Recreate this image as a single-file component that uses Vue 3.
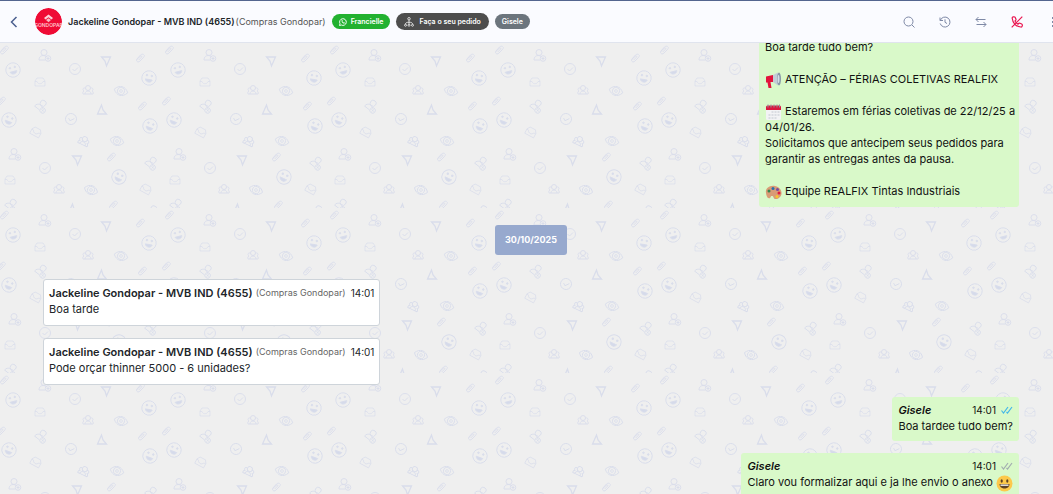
<script setup>
import { ref } from 'vue';

const contact = ref({
    name: 'Jackeline Gondopar - MVB IND (4655)',
    company: '(Compras Gondopar)',
});

const received = ref([
    { id: 1, time: '14:01', text: 'Boa tarde' },
    { id: 2, time: '14:01', text: 'Pode orçar thinner 5000 - 6 unidades?' },
]);

const sent = ref([
    { id: 3, time: '14:01', text: 'Boa tardee tudo bem?', read: true, smile: false },
    { id: 4, time: '14:01', text: 'Claro vou formalizar aqui e ja lhe envio o anexo', read: false, smile: true },
]);

// wallpaper tile: symbol, x, y, rotation
const doodles = [
    ['clip', 4, 7, 0], ['smile', 13, 27, -15], ['user', 44, 13, 0], ['check', 75, 26, 0],
    ['tri', 106, 18, 0], ['clip', 140, 15, 0], ['smile', 149, 35, 10], ['inbox', 40, 39, 0],
    ['group', 88, 47, 0], ['eye', 121, 48, 15], ['clip', 1, 58, 0], ['clip', 166, 58, 0],
    ['user', 41, 63, 38], ['tri', 102, 67, 180], ['clip', 142, 63, 0], ['check', 71, 76, 20],
    ['smile', 9, 77, 20], ['smile', 150, 83, 20], ['inbox', 36, 89, 28], ['group', 84, 98, 25],
    ['eye', 117, 98, 15], ['tri', 77, 117, 0], ['clip', 111, 114, 0], ['user', 14, 112, 0],
    ['check', 45, 125, 0], ['user', 151, 120, 38], ['smile', 119, 134, 25], ['inbox', 10, 137, 0],
    ['group', 59, 146, 0], ['eye', 91, 147, 20], ['inbox', 146, 146, 28], ['user', 11, 162, 38],
    ['tri', 73, 166, 180], ['clip', 113, 162, 0], ['user', 152, 169, 30],
];
</script>

<template>
    <div class="page">
        <header class="topbar">
            <button type="button" class="icon-btn back" aria-label="Voltar">
                <svg width="8" height="12" viewBox="0 0 8 12"><path d="M6.5 1 1.5 6l5 5" fill="none" stroke="#4a5f8f" stroke-width="1.5" /></svg>
            </button>
            <svg class="avatar" viewBox="0 0 27 27">
                <circle cx="13.5" cy="13.5" r="13.5" fill="#ef0b35" />
                <path d="m9 10 4.500-3.500L18 10l-1.500 1.500-3-2.300-3 2.300z" fill="#fbd3da" />
                <path d="m11 12 2.500-1.800L16 12l-2.500 2.300z" fill="#f9b9c4" />
                <text x="13.500" y="19" text-anchor="middle" font-size="5" font-weight="600" fill="#ffc4ce">GONDOPAR</text>
            </svg>
            <h1>{{ contact.name }}</h1>
            <span class="company">{{ contact.company }}</span>
            <span class="tag green">
                <svg width="8" height="8" viewBox="0 0 16 16" fill="none" stroke="#fff">
                    <path d="m1 15 1-3.700A6.700 6.700 0 1 1 4.700 14z" stroke-width="1.900" />
                    <path d="M5 4.800c0 3.500 2.500 6.200 6 6.400l.9-1.900-2-1-1 .9C8 8.800 7.300 8 6.800 6.900l.9-1-.9-1.900z" fill="#fff" stroke="none" />
                </svg>
                Francielle
            </span>
            <span class="tag dark">
                <svg width="10" height="10" viewBox="0 0 20 20" fill="none" stroke="#fff" stroke-width="1.500">
                    <circle cx="10" cy="3.500" r="2.500" />
                    <circle cx="3" cy="16.500" r="2" />
                    <circle cx="10" cy="16.500" r="2" />
                    <circle cx="17" cy="16.500" r="2" />
                    <path d="M10 6v8.500M3 14.500c0-3 2-4 7-4s7 1 7 4" />
                </svg>
                Faça o seu pedido
            </span>
            <span class="tag gray">Gisele</span>
            <nav class="actions">
                <button type="button" class="icon-btn" aria-label="Pesquisar">
                    <svg width="12" height="12" viewBox="0 0 12 12" fill="none" stroke="#7e89a6"><circle cx="5.500" cy="5.500" r="4.500" /><path d="m9 9 2.500 2.500" /></svg>
                </button>
                <button type="button" class="icon-btn" aria-label="Histórico">
                    <svg width="12" height="12" viewBox="0 0 12 12" fill="none" stroke="#7e89a6"><path d="M1 1.500v3h3M1.300 4.300A5 5 0 1 1 1.200 7.500M6 3.300V6.300l2 1.200" /></svg>
                </button>
                <button type="button" class="icon-btn" aria-label="Transferir">
                    <svg width="12" height="12" viewBox="0 0 12 12" fill="none" stroke="#7e89a6"><path d="M3.500 1 1 3.500 3.500 6M1 3.500h9.500M8.500 6 11 8.500 8.500 11M11 8.500H1.500" /></svg>
                </button>
                <button type="button" class="icon-btn" aria-label="Encerrar">
                    <svg width="12" height="12" viewBox="0 0 12 12" fill="none" stroke="#ea1650" stroke-width="1.200"><path d="M1.200 2.200c-.4-1.400 2.300-2 3-.8l.8 1.800c.2.800-.2 1.200-1 1.700.6 1.300 1.700 2.500 3 3.200.6-.9 1.200-1.200 2-.9l1.700.8c1.200.7.6 3.300-.9 3C5 10.800 1.700 7 1.200 2.200zM11.300.7.700 11.300" /></svg>
                </button>
                <button type="button" class="icon-btn" aria-label="Mais">
                    <svg width="12" height="12" viewBox="0 0 12 12" fill="#7e89a6"><path d="M5 1h2v2H5zM5 5h2v2H5zM5 9h2v2H5z" /></svg>
                </button>
            </nav>
        </header>

        <main class="chat">
            <svg class="wallpaper" aria-hidden="true">
                <defs>
                    <g id="d-clip"><path d="m-3.500 1.500 4-4.500c2.500-2 5 0 3.200 2.200L0 3c-2 2-4.500.2-3-1.700L.3-1.800c1-.8 2 0 1.200 1L-1.300 2" /></g>
                    <g id="d-smile"><circle r="7.200" /><path d="M-3.500 1.500h7C3 5-2.500 5-3.500 1.500z" fill="#d5daea" /><circle cx="-2.500" cy="-2.500" r=".8" fill="#d5daea" /><circle cx="2.500" cy="-2.500" r=".8" fill="#d5daea" /></g>
                    <g id="d-user"><circle cy="-3.500" r="3" /><path d="M1 4h-6c0-5 5-5.500 8-3" /><circle cx="4" cy="2.500" r="2.800" /><path d="M4 1v3M2.500 2.500h3" /></g>
                    <g id="d-check"><circle r="5.500" /><path d="m-2.500 0 2 2 3.500-3.500" /></g>
                    <g id="d-tri"><path d="M-4.500-4h9L.5 5-1 0z" stroke-width="1.300" /></g>
                    <g id="d-inbox"><path d="M-5 4V-1l2-3h6l2 3v5zM-5-.5h2c1 3 5 3 6 0h2" stroke-width=".7" /></g>
                    <g id="d-group"><circle cy="-2" r="2.500" /><path d="M-3 4c0-4 6-4 6 0zM-2.500-2c-3-.5-3 2-1.500 3-1.500.5-1.300 3-1 3h2M2.500-2c3-.5 3 2 1.500 3 1.500.5 1.300 3 1 3h-2" /></g>
                    <g id="d-eye"><path d="M-7 0C-3-6 3-6 7 0 3 6-3 6-7 0z" /><circle r="3.500" /><circle r="1.300" /></g>
                    <pattern id="tile" width="165" height="165" patternUnits="userSpaceOnUse">
                        <g fill="none" stroke="#d9ddeb" stroke-width=".9">
                            <use v-for="(d, i) in doodles" :key="i" :href="'#d-' + d[0]" :transform="`translate(${d[1]} ${d[2]}) rotate(${d[3]})`" />
                        </g>
                    </pattern>
                </defs>
                <rect width="100%" height="100%" fill="url(#tile)" />
            </svg>

            <div class="messages">
                <article class="bubble out notice">
                    <p>Boa tarde tudo bem?</p>
                    <p class="gap">
                        <svg class="emoji" viewBox="0 0 17 17">
                            <path d="M1 4.500 8 3v7H5.500l1 6H3.500L2.500 10.500H1z" fill="#e2143c" />
                            <path d="M8 3l5-2.500v13L8 10z" fill="#c3ced7" />
                            <ellipse cx="14" cy="7" rx="2" ry="6.500" fill="#8798a7" />
                            <ellipse cx="13.500" cy="7" rx="1" ry="4" fill="#d7e0e7" />
                        </svg>
                        ATENÇÃO – FÉRIAS COLETIVAS REALFIX
                    </p>
                    <p class="gap">
                        <svg class="emoji" viewBox="0 0 17 17">
                            <rect x="1" y="2" width="15" height="14" rx="1.500" fill="#f3f3f5" />
                            <path d="M1 6V3q0-1.500 1.500-1.500h12Q16 1.500 16 3v3z" fill="#d9183f" />
                            <path d="M3 .5v3M6 .5v3M9 .5v3M12 .5v3M14.500.5v3" stroke="#8d949c" />
                            <path d="M6.500 8h8M3.500 11h11M3.500 14h8" stroke="#d3d6dc" stroke-width="1.500" stroke-dasharray="2 1" />
                        </svg>
                        Estaremos em férias coletivas de 22/12/25 a 04/01/26.
                    </p>
                    <p>Solicitamos que antecipem seus pedidos para garantir as entregas antes da pausa.</p>
                    <p class="gap">
                        <svg class="emoji" viewBox="0 0 17 17">
                            <path d="M1 9C0 4 5 1 10 2c5 1 7 5 6.500 8S13 15.500 10 15c-2-.5-1-3-3-3s-1 2.500-3 2.300S1.300 11 1 9z" fill="#d99b75" />
                            <circle cx="4" cy="7" r="1.500" fill="#35834b" />
                            <circle cx="8" cy="4.500" r="1.500" fill="#286fae" />
                            <circle cx="12.500" cy="5.500" r="1.500" fill="#7c4b9e" />
                            <circle cx="14" cy="9" r="1.500" fill="#e21c3c" />
                            <circle cx="12" cy="12.500" r="1.500" fill="#f8c62c" />
                        </svg>
                        Equipe REALFIX Tintas Industriais
                    </p>
                </article>

                <time class="date">30/10/2025</time>

                <article v-for="m in received" :key="m.id" class="bubble in">
                    <div class="meta">
                        <strong>{{ contact.name }}</strong>
                        <span class="small">{{ contact.company }}</span>
                        <time>{{ m.time }}</time>
                    </div>
                    <p>{{ m.text }}</p>
                </article>

                <article v-for="m in sent" :key="m.id" class="bubble out">
                    <div class="meta">
                        <strong class="author">Gisele</strong>
                        <time>{{ m.time }}</time>
                        <svg class="ticks" :class="{ read: m.read }" width="12" height="8" viewBox="0 0 12 8"><path d="m.5 4.500 2 2.500L7 1M5.500 6l1 1L11 1" /></svg>
                    </div>
                    <p>
                        {{ m.text }}
                        <svg v-if="m.smile" class="emoji" viewBox="0 0 17 17">
                            <circle cx="8.500" cy="8.500" r="8" fill="#fdc94b" />
                            <ellipse cx="5.700" cy="6" rx="1.100" ry="1.700" fill="#5d4124" />
                            <ellipse cx="11.300" cy="6" rx="1.100" ry="1.700" fill="#5d4124" />
                            <path d="M3.500 9h10c0 6-10 6-10 0z" fill="#5d4124" />
                            <path d="M4.500 9.500h8v1.300h-8z" fill="#fff" />
                        </svg>
                    </p>
                </article>
            </div>
        </main>
    </div>
</template>

<style>
body {
    margin: 0;
}
</style>

<style scoped>
.page {
    height: 100vh;
    display: flex;
    flex-direction: column;
    overflow: hidden;
    font-family: Inter, sans-serif;
    font-size: 11px;
    line-height: 16px;
    color: #111;
    background: #efefef;
}

.topbar {
    display: flex;
    align-items: center;
    flex: none;
    height: 41px;
    padding-left: 10px;
    border-top: 1px solid #53658f;
    border-bottom: 1px solid #e0e4ee;
    background: #fafbff;
    white-space: nowrap;
}

.icon-btn {
    display: flex;
    padding: 0;
    border: none;
    background: none;
    cursor: pointer;
}

.avatar {
    width: 27px;
    height: 27px;
    margin: 0 6px 0 17px;
    border-radius: 50%;
}

h1 {
    margin: 0 1px 0 0;
    font-size: 9px;
    font-weight: 600;
    color: #212529;
}

.company {
    font-size: 9px;
    color: #555;
}

.tag {
    display: flex;
    align-items: center;
    gap: 4px;
    height: 15px;
    margin-left: 6px;
    padding: 0 7px;
    border-radius: 9px;
    font-size: 7px;
    font-weight: 600;
    color: #fff;
}

.green {
    background: #22b130;
}

.dark {
    height: 17px;
    gap: 5px;
    padding: 0 8px;
    background: #4d4d4d;
}

.gray {
    background: #6c757d;
}

/* the last button runs past the right edge */
.actions {
    display: flex;
    align-items: center;
    gap: 24px;
    margin: 0 -6px 0 auto;
}

.chat {
    position: relative;
    flex: 1;
    min-height: 0;
    overflow: hidden;
}

.wallpaper {
    position: absolute;
    inset: 0;
    width: 100%;
    height: 100%;
}

.messages {
    position: relative;
    display: flex;
    flex-direction: column;
    gap: 12px;
    padding: 0 34px 0 43px;
}

.bubble {
    box-sizing: border-box;
    border-radius: 3px;
}

.bubble p {
    margin: 0;
}

.out {
    align-self: flex-end;
    padding: 5px 6px 7px;
    background: #d9f9c9;
}

.notice {
    width: 260px;
    margin-top: -4px;
    padding: 0 2px 8px 6px;
}

.notice .gap {
    margin-top: 16px;
}

.in {
    align-self: flex-start;
    padding: 5px 5px 8px;
    border: 1px solid #ced4da;
    background: #fff;
    color: #212529;
}

.date {
    align-self: center;
    margin: 6px 0 12px;
    padding: 7px 10px;
    border-radius: 3px;
    background: #97a9ce;
    color: #fff;
    font-size: 9px;
    font-weight: 700;
}

.meta {
    display: flex;
    align-items: center;
    font-size: 10px;
}

.meta strong {
    font-size: 11px;
    font-weight: 600;
}

.meta .small {
    margin: 0 5px 0 3px;
    font-size: 9px;
    color: #666;
}

.meta .author {
    margin-right: auto;
    font-style: italic;
}

.ticks {
    margin-left: 5px;
    fill: none;
    stroke: #a3adb0;
    stroke-width: 1.2;
}

.ticks.read {
    stroke: #45b8e8;
}

.emoji {
    width: 17px;
    height: 17px;
    margin: -2px 0;
    vertical-align: middle;
}
</style>
